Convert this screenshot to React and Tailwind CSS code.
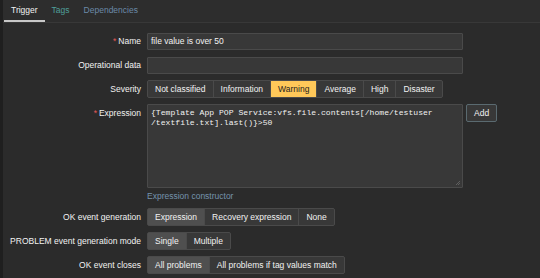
import React from "react";

const font = { fontFamily: '"Liberation Sans", Arial, sans-serif' };

function Label({ children, req }) {
  return (
    <div className="w-[138px] shrink-0 text-right text-[8.5px] text-[#f2f2f2] leading-none">
      {req && <span className="text-[#e45959] mr-[2px]">*</span>}
      {children}
    </div>
  );
}

function Seg({ items, active, activeClass }) {
  return (
    <div className="flex h-[18px] border border-[#4a4a4a] rounded-[2px] bg-[#383838]">
      {items.map((it, i) => (
        <div
          key={it}
          className={
            "flex items-center px-[7px] text-[8.5px] leading-none " +
            (i > 0 ? "border-l border-[#4a4a4a] " : "") +
            (i === active
              ? activeClass || "bg-[#4f4f4f] text-[#f2f2f2]"
              : "text-[#f2f2f2]")
          }
        >
          {it}
        </div>
      ))}
    </div>
  );
}

export default function App() {
  return (
    <div
      className="w-[540px] h-[278px] bg-[#2b2b2b] overflow-hidden border-l-[3px] border-[#1f1f1f]"
      style={font}
    >
      <div className="flex h-[23px] items-end border-b border-[#383838] bg-[#2d2d2d] pl-[1px]">
        <div className="h-[22px] px-[7px] flex items-center text-[8.5px] text-[#f2f2f2] border-b-2 border-[#c8c8c8]">
          Trigger
        </div>
        <div className="h-[22px] px-[7px] flex items-center text-[8.5px] text-[#4f9f9a] border-b-2 border-transparent">
          Tags
        </div>
        <div className="h-[22px] px-[7px] flex items-center text-[8.5px] text-[#6b8aa8] border-b-2 border-transparent">
          Dependencies
        </div>
      </div>

      <div className="flex flex-col pt-[10px]">
        <div className="flex items-center gap-[6px] h-[17px]">
          <Label req>Name</Label>
          <div className="w-[316px] h-[17px] bg-[#383838] border border-[#4a4a4a] rounded-[1px] flex items-center px-[3px] text-[8.5px] text-[#f2f2f2]">
            file value is over 50
          </div>
        </div>

        <div className="flex items-center gap-[6px] h-[17px] mt-[7px]">
          <Label>Operational data</Label>
          <div className="w-[316px] h-[17px] bg-[#383838] border border-[#4a4a4a] rounded-[1px]" />
        </div>

        <div className="flex items-center gap-[6px] mt-[6px]">
          <Label>Severity</Label>
          <Seg
            items={["Not classified", "Information", "Warning", "Average", "High", "Disaster"]}
            active={2}
            activeClass="bg-[#ffc859] text-[#1f1f1f]"
          />
        </div>

        <div className="flex items-start gap-[6px] mt-[6px]">
          <div className="pt-[5px]">
            <Label req>Expression</Label>
          </div>
          <div className="relative w-[316px] h-[84px] bg-[#383838] border border-[#4a4a4a] rounded-[1px] px-[3px] pt-[3px] text-[8.1px] leading-[10px] text-[#f2f2f2]" style={{ fontFamily: '"Liberation Mono", "DejaVu Sans Mono", monospace' }}>
            <div>{"{Template App POP Service:vfs.file.contents[/home/testuser"}</div>
            <div>{"/textfile.txt].last()}>50"}</div>
            <svg className="absolute right-[1px] bottom-[1px]" width="6" height="6" viewBox="0 0 6 6">
              <path d="M5 1 L1 5 M5 3 L3 5" stroke="#6a6a6a" strokeWidth="0.8" />
            </svg>
          </div>
          <div className="ml-[-3px] h-[18px] px-[7px] flex items-center border border-[#5a6a70] bg-[#383838] rounded-[2px] text-[8.5px] text-[#f2f2f2]">
            Add
          </div>
        </div>

        <div className="flex items-center gap-[6px] h-[14px] mt-[1px]">
          <div className="w-[138px] shrink-0" />
          <div className="text-[8.5px] text-[#7593ad] leading-none">Expression constructor</div>
        </div>

        <div className="flex items-center gap-[6px] mt-[5px]">
          <Label>OK event generation</Label>
          <Seg items={["Expression", "Recovery expression", "None"]} active={0} />
        </div>

        <div className="flex items-center gap-[6px] mt-[6px]">
          <Label>PROBLEM event generation mode</Label>
          <Seg items={["Single", "Multiple"]} active={0} />
        </div>

        <div className="flex items-center gap-[6px] mt-[6px]">
          <Label>OK event closes</Label>
          <Seg items={["All problems", "All problems if tag values match"]} active={0} />
        </div>
      </div>
    </div>
  );
}
